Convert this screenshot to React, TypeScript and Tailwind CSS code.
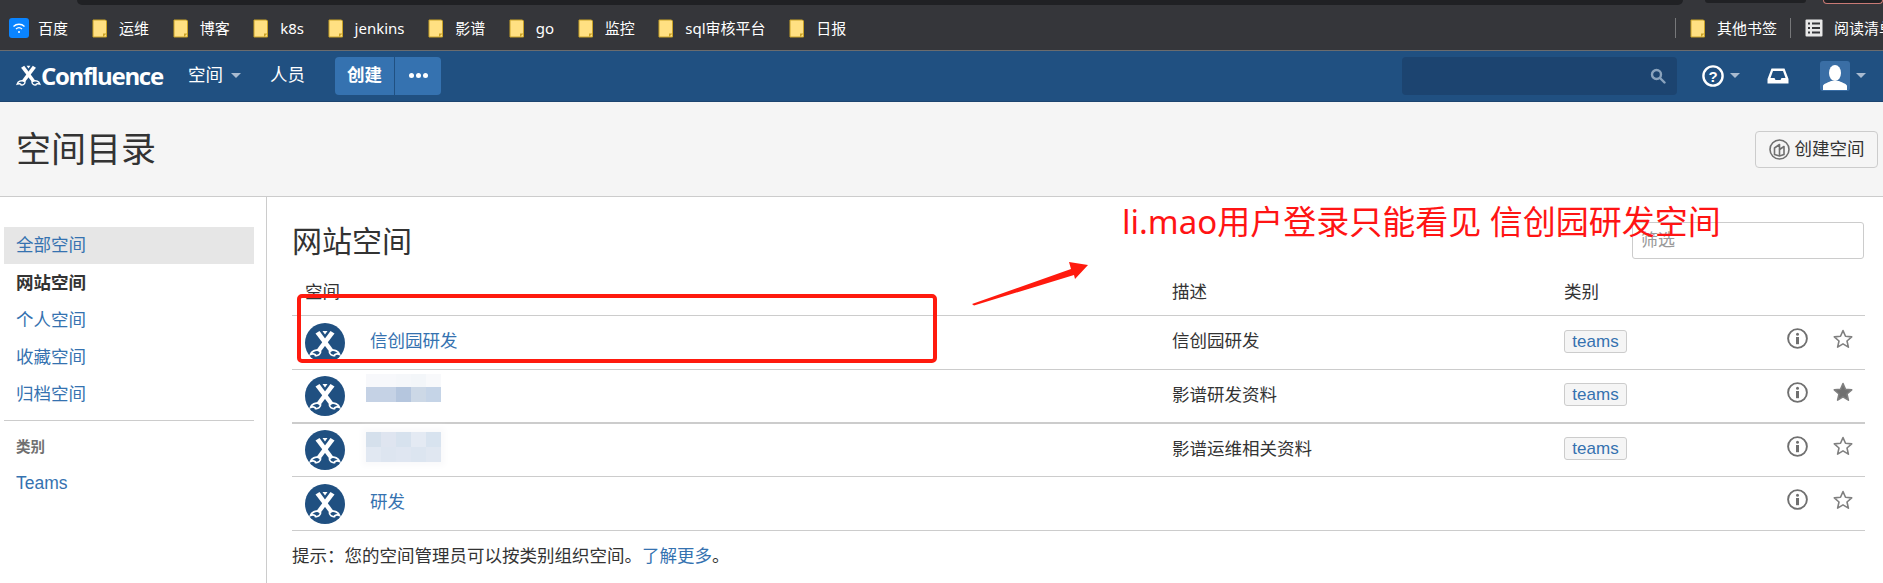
import { ReactNode } from 'react';

const cjk = 'font-["Liberation_Sans","Noto_Sans_CJK_SC",sans-serif]';

function FolderIcon() {
  return (
    <svg width="16" height="19" viewBox="0 0 16 19" className="shrink-0">
      <path d="M1 1h12.5l1 1v16H1z" fill="#ffe082" stroke="#c9a227" strokeWidth="1" />
      <path d="M11 18v-3.5h3.5z" fill="#c9a227" />
    </svg>
  );
}

function Bookmark({ label }: { label: string }) {
  return (
    <div className="flex items-center gap-[11px]">
      <FolderIcon />
      <span>{label}</span>
    </div>
  );
}

function Caret({ color = '#a9bbd0' }: { color?: string }) {
  return (
    <svg width="10" height="5" viewBox="0 0 10 5">
      <path d="M0 0h10L5 5z" fill={color} />
    </svg>
  );
}

function Scissors({ color = 'white' }: { color?: string }) {
  return (
    <g fill="none" stroke={color} strokeLinecap="round">
      <path d="M10.5 10.5 L14.5 8 L28.5 27 L25 29.5 Z" fill={color} stroke="none" />
      <path d="M29.5 10.5 L25.5 8 L11.5 27 L15 29.5 Z" fill={color} stroke="none" />
      <path d="M17.5 8 L20 11.5 L22.5 8 Z" fill={color} stroke="none" />
      <path d="M14 27.5 C10.5 26.5 6.5 28 5.5 31.5 C8 30.5 10.5 31 10.5 32.5 C13 33 16 31 15.5 28.5" strokeWidth="1.8" />
      <path d="M26 27.5 C29.5 26.5 33.5 28 34.5 31.5 C32 30.5 29.5 31 29.5 32.5 C27 33 24 31 24.5 28.5" strokeWidth="1.8" />
    </g>
  );
}

function SpaceAvatar() {
  return (
    <svg width="40" height="40" viewBox="0 0 40 40" className="shrink-0">
      <circle cx="20" cy="20" r="20" fill="#205081" />
      <Scissors />
    </svg>
  );
}

function InfoIcon() {
  return (
    <svg width="21" height="21" viewBox="0 0 21 21" className="mb-[8px]">
      <circle cx="10.5" cy="10.5" r="9.4" fill="none" stroke="#707070" strokeWidth="1.9" />
      <circle cx="10.5" cy="6.2" r="1.5" fill="#707070" />
      <path d="M9 9h3v7.2H9z" fill="#707070" />
    </svg>
  );
}

function StarIcon({ filled }: { filled?: boolean }) {
  return (
    <svg width="20" height="20" viewBox="0 0 20 20" className="mb-[8px]">
      <path
        d="M10 1.6l2.5 5.7 6.2.6-4.7 4.1 1.4 6.1L10 14.9l-5.4 3.2L6 12 1.3 7.9l6.2-.6z"
        fill={filled ? '#707070' : 'none'}
        stroke="#808080"
        strokeWidth="1.6"
        strokeLinejoin="round"
      />
    </svg>
  );
}

function Mosaic({ cells, className }: { cells: string[]; className: string }) {
  return (
    <div className={`grid grid-cols-5 w-[75px] ${className}`}>
      {cells.map((c, i) => (
        <div key={i} className={c} />
      ))}
    </div>
  );
}

function SpaceRow({
  name,
  desc,
  tag,
  starred,
  rowClass,
}: {
  name: ReactNode;
  desc?: string;
  tag?: boolean;
  starred?: boolean;
  rowClass: string;
}) {
  return (
    <div className={`grid grid-cols-[867px_393px_222px_46px_45px] items-center border-b border-[#cccccc] ${rowClass}`}>
      <div className="flex items-center pl-[13px]">
        <SpaceAvatar />
        {name}
      </div>
      <div className="pl-[13px] pb-[2px] text-[#333333]">{desc}</div>
      <div className="pl-[12px] flex items-center pb-[3px]">
        {tag && (
          <span className="inline-flex items-center h-[23px] w-[63px] justify-center rounded-[3px] border border-[#cccccc] bg-[#f5f5f5] text-[#3572b0] text-[17px] leading-none">
            teams
          </span>
        )}
      </div>
      <div className="flex justify-center">
        <InfoIcon />
      </div>
      <div className="flex justify-center">
        <StarIcon filled={starred} />
      </div>
    </div>
  );
}

const navLinks = ['个人空间', '收藏空间', '归档空间'];

export default function App() {
  return (
    <div className={`relative w-[1883px] h-[583px] overflow-hidden bg-white text-[17.5px] ${cjk}`}>
      {/* browser chrome */}
      <div className="h-[5px] bg-[#35363a] pl-[77px] flex">
        <div className="h-[5px] bg-[#202124] rounded-bl-lg rounded-br-lg w-[1606px]" />
        <div className="h-[3px] bg-[#202124] rounded-b-lg w-[101px] ml-[22px]" />
        <div className="h-[4px] border-b border-x border-[#c97a75] rounded-b-lg w-[60px] ml-[17px] bg-[#202124]" />
      </div>
      <div className="h-[46px] bg-[#35363a] border-b border-[#6b6c6e] flex items-center text-white text-[15px] pl-[9px] pt-[1px] font-['Noto_Sans','Noto_Sans_CJK_SC',sans-serif]">
        <div className="flex items-center gap-[9px] mr-[24px]">
          <div className="w-[20px] h-[20px] rounded-[3px] bg-[#0a84ff] flex items-center justify-center">
            <svg width="14" height="14" viewBox="0 0 14 14" fill="none" stroke="white" strokeWidth="1.3">
              <path d="M1.5 5.5C4.5 2.5 9.5 2.5 12.5 5.5" />
              <path d="M4 8c1.7-1.6 4.3-1.6 6 0" />
              <circle cx="7" cy="11" r="1" fill="white" stroke="none" />
            </svg>
          </div>
          <span>百度</span>
        </div>
        <div className="flex items-center gap-[23.6px]">
          <Bookmark label="运维" />
          <Bookmark label="博客" />
          <Bookmark label="k8s" />
          <Bookmark label="jenkins" />
          <Bookmark label="影谱" />
          <Bookmark label="go" />
          <Bookmark label="监控" />
          <Bookmark label="sql审核平台" />
          <Bookmark label="日报" />
        </div>
        <div className="ml-auto flex items-center h-[20px] whitespace-nowrap w-[208px] overflow-hidden">
          <div className="w-px h-[20px] shrink-0 bg-[#77787a] mr-[14px]" />
          <Bookmark label="其他书签" />
          <div className="w-px h-[20px] shrink-0 bg-[#77787a] ml-[13px] mr-[14px]" />
          <svg width="18" height="18" viewBox="0 0 18 18" className="shrink-0 mr-[11px]">
            <rect x="0.5" y="0.5" width="17" height="17" rx="1" fill="#e8e8e8" />
            <path d="M3 3.5h2v2H3zM7 3.5h8v2H7zM3 8h2v2H3zM7 8h8v2H7zM3 12.5h2v2H3zM7 12.5h8v2H7z" fill="#35363a" />
          </svg>
          <span>阅读清单</span>
        </div>
      </div>

      {/* confluence header */}
      <header className="h-[51px] bg-[#205081] border-b border-[#1c4470] flex items-center text-white pl-[16px] pr-[17px] pb-[1px]">
        <div className="flex items-center w-[172px]">
          <svg width="25" height="25" viewBox="4 6 32 29" className="shrink-0">
            <Scissors />
          </svg>
          <span className="font-['Open_Sans',sans-serif] font-bold text-[24px] tracking-[-1.3px] leading-none">Confluence</span>
        </div>
        <div className="flex items-center gap-[8px] w-[82px]">
          <span>空间</span>
          <Caret />
        </div>
        <span className="w-[65px]">人员</span>
        <div className="flex h-[38px] rounded-[4px] overflow-hidden bg-[#3572b0] font-bold">
          <div className="w-[60px] flex items-center justify-center border-r border-[#205081]">创建</div>
          <div className="w-[46px] flex items-center justify-center gap-[2px]">
            <span className="w-[5px] h-[5px] rounded-full bg-white" />
            <span className="w-[5px] h-[5px] rounded-full bg-white" />
            <span className="w-[5px] h-[5px] rounded-full bg-white" />
          </div>
        </div>
        <div className="ml-auto flex items-center">
          <div className="w-[275px] h-[38px] rounded-[4px] bg-[#1c4470] flex items-center justify-end pr-[11px] mr-[25px]">
            <svg width="16" height="16" viewBox="0 0 16 16" fill="none" stroke="#8aa3bd" strokeWidth="2.4">
              <circle cx="6.5" cy="6.5" r="4.5" />
              <path d="M10 10l4.5 4.5" strokeLinecap="round" />
            </svg>
          </div>
          <svg width="22" height="22" viewBox="0 0 22 22" className="mr-[6px]">
            <circle cx="11" cy="11" r="9.6" fill="none" stroke="white" strokeWidth="2.4" />
            <text x="11" y="16.5" textAnchor="middle" fill="white" fontSize="15" fontWeight="700" fontFamily="Liberation Sans">?</text>
          </svg>
          <Caret />
          <svg width="22" height="16" viewBox="0 0 22 16" className="ml-[27px] mr-[31px]">
            <path d="M4.5 0.5h13L21.5 11v4.5H.5V11zM6 3l-2.5 7h4l1 2h5l1-2h4L16 3z" fill="white" fillRule="evenodd" />
          </svg>
          <div className="w-[30px] h-[30px] rounded-[3px] bg-[#3a6ea5] flex items-end justify-center mr-[6px]">
            <svg width="26" height="27" viewBox="0 0 26 27">
              <ellipse cx="13" cy="9" rx="6" ry="8" fill="white" />
              <path d="M1 26v-4c0-2 4-3 8-5h8c4 2 8 3 8 5v4z" fill="white" />
            </svg>
          </div>
          <Caret />
        </div>
      </header>

      {/* page header */}
      <div className="h-[95px] bg-[#f5f5f5] border-b border-[#cccccc] flex items-center justify-between pl-[16px] pr-[5px]">
        <h1 className="text-[35px] text-[#333333] font-normal mt-[2px]">空间目录</h1>
        <button className="flex items-center justify-center gap-[5px] w-[123px] h-[37px] rounded-[4px] border border-[#cccccc] text-[#333333]">
          <svg width="21" height="21" viewBox="0 0 21 21" fill="none" stroke="#707070" strokeWidth="1.6" strokeLinejoin="round">
            <circle cx="10.5" cy="10.5" r="9.5" />
            <path d="M5.5 9l5-3.5v5l4.5-3v8l-4.5 1.5-5-1.5z" />
            <path d="M10.5 10.5v6.5" />
          </svg>
          创建空间
        </button>
      </div>

      <div className="flex h-[386px]">
        {/* sidebar */}
        <nav className="w-[267px] shrink-0 border-r border-[#cccccc] pt-[30px] pl-[4px] text-[#3572b0]">
          <div className="w-[250px] h-[37px] bg-[#e6e6e6] pl-[12px] flex items-center">全部空间</div>
          <div className="h-[38px] pl-[12px] flex items-center font-bold text-[#333333]">网站空间</div>
          {navLinks.map((label) => (
            <div key={label} className="h-[37px] pl-[12px] flex items-center">
              {label}
            </div>
          ))}
          <div className="w-[250px] border-t border-[#cccccc] mt-[7px]" />
          <div className="mt-[16px] pl-[12px] text-[14.5px] font-bold text-[#707070] leading-[20px]">类别</div>
          <div className="mt-[14px] pl-[12px] leading-[24px]">Teams</div>
        </nav>

        {/* directory */}
        <main className="flex-1 pl-[25px]">
          <div className="w-[1573px]">
            <div className="flex items-start justify-between h-[72px] pt-[25px]">
              <h2 className="text-[30px] text-[#333333] leading-[40px] font-normal">网站空间</h2>
              <input
                placeholder="筛选"
                className="w-[232px] h-[37px] rounded-[3px] border border-[#cccccc] px-[8px] mr-px text-[17px] placeholder:text-[#999999] outline-none"
              />
            </div>
            <div className="grid grid-cols-[867px_393px_222px] items-center h-[47px] border-b border-[#cccccc] text-[#333333]">
              <div className="pl-[13px]">空间</div>
              <div className="pl-[13px]">描述</div>
              <div className="pl-[12px]">类别</div>
            </div>
            <SpaceRow
              rowClass="h-[54px]"
              name={<span className="ml-[25px] mb-[2px] text-[#3572b0]">信创园研发</span>}
              desc="信创园研发"
              tag
            />
            <SpaceRow
              rowClass="h-[54px] border-b-2"
              name={
                <Mosaic
                  className="ml-[21px] mb-[16px] h-[28px] grid-rows-[13px_15px]"
                  cells={[
                    'bg-[#f7f8fb]',
                    'bg-[#f7f8fb]',
                    'bg-[#f5f7fa]',
                    'bg-[#f3f6f9]',
                    'bg-[#f8f9fb]',
                    'bg-[#c5d2e5]',
                    'bg-[#c5d2e5]',
                    'bg-[#b5c6de]',
                    'bg-[#ccd8e6]',
                    'bg-[#c5d4e7]',
                  ]}
                />
              }
              desc="影谱研发资料"
              tag
              starred
            />
            <SpaceRow
              rowClass="h-[53px]"
              name={
                <Mosaic
                  className="ml-[21px] mb-[6px] h-[30px] grid-rows-[15px_15px] shadow-[0_0_6px_4px_#fafafb]"
                  cells={[
                    'bg-[#d5e0ec]',
                    'bg-[#dfe5f0]',
                    'bg-[#d7e2ee]',
                    'bg-[#e4eaf3]',
                    'bg-[#d8e3ef]',
                    'bg-[#e1e8f2]',
                    'bg-[#dde5f0]',
                    'bg-[#dfe6f1]',
                    'bg-[#dce5f0]',
                    'bg-[#e0e7f1]',
                  ]}
                />
              }
              desc="影谱运维相关资料"
              tag
            />
            <SpaceRow rowClass="h-[54px]" name={<span className="ml-[25px] mb-[2px] text-[#3572b0]">研发</span>} />
            <p className="mt-[13px] text-[#333333] leading-[24px]">
              提示：您的空间管理员可以按类别组织空间。<span className="text-[#3572b0]">了解更多</span>。
            </p>
          </div>
        </main>
      </div>

      {/* red annotations drawn over the screenshot */}
      <div className="absolute left-[297px] top-[294px] w-[640px] h-[69px] rounded-[5px] border-[4px] border-[#ff1a0e]" />
      <svg className="absolute left-[970px] top-[258px]" width="120" height="50" viewBox="970 258 120 50">
        <path d="M972 304L1071 269 1069 262 1088 265 1075 279 1074 275 974 305.5z" fill="#ff1a0e" />
      </svg>
      <div className="absolute left-[1122px] top-[199px] text-[33px] leading-[46px] text-[#ff1414] whitespace-nowrap font-['Noto_Sans','Noto_Sans_CJK_SC',sans-serif]">
        li.mao用户登录只能看见 信创园研发空间
      </div>
    </div>
  );
}
